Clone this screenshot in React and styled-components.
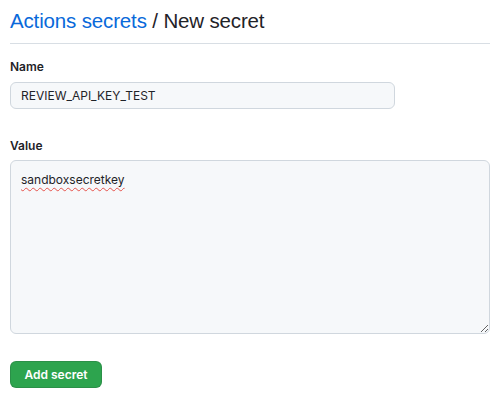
import React from 'react';
import styled, { createGlobalStyle } from 'styled-components';

const GlobalStyle = createGlobalStyle`
  body {
    margin: 0;
    background: #ffffff;
    font-family: Inter, "Noto Sans", "Liberation Sans", sans-serif;
    color: #1f2328;
  }
`;

const Page = styled.div`
  padding: 0 10px;
  width: 480px;
`;

const Header = styled.div`
  padding-top: 8px;
  padding-bottom: 9px;
  border-bottom: 1px solid #d8dee4;
  margin-bottom: 16px;
`;

const Title = styled.h1`
  margin: 0;
  font-family: "Liberation Sans", Arial, sans-serif;
  font-size: 20.5px;
  font-weight: 400;
  line-height: 26px;
  letter-spacing: -0.15px;
`;

const Crumb = styled.a`
  color: #0969da;
  text-decoration: none;
`;

const Field = styled.div`
  display: flex;
  flex-direction: column;
  gap: ${(props) => props.gap || 8}px;
  margin-bottom: ${(props) => props.spacing || 0}px;
`;

const Label = styled.label`
  font-size: 12px;
  font-weight: 600;
  line-height: 14px;
`;

const TextInput = styled.input`
  box-sizing: border-box;
  width: ${(props) => props.w || 385}px;
  height: 27px;
  padding: 0 10px;
  font-family: inherit;
  font-size: 12px;
  color: #1f2328;
  background: #f6f8fa;
  border: 1px solid #d0d7de;
  border-radius: 6px;
  outline: none;
`;

const TextArea = styled.textarea`
  box-sizing: border-box;
  width: 480px;
  height: 174px;
  padding: 10px 10px;
  font-family: inherit;
  font-size: 12px;
  line-height: 18px;
  color: #1f2328;
  background: #f6f8fa;
  border: 1px solid #d0d7de;
  border-radius: 6px;
  outline: none;
  resize: vertical;
  text-decoration-line: underline;
  text-decoration-style: wavy;
  text-decoration-color: #e5534b;
  text-decoration-thickness: 1px;
  text-underline-offset: 3px;
  display: block;
`;

const Button = styled.button`
  margin-top: 27px;
  width: 92px;
  height: 27px;
  padding: 0;
  font-family: inherit;
  font-size: 12px;
  font-weight: 600;
  color: #ffffff;
  background: ${(props) => props.color || '#2da44e'};
  border: 1px solid rgba(31, 35, 40, 0.15);
  border-radius: 6px;
  cursor: pointer;
`;

function App() {
  return (
    <>
      <GlobalStyle />
      <Page>
        <Header>
          <Title>
            <Crumb href="#">Actions secrets</Crumb> / New secret
          </Title>
        </Header>
        <Field spacing={30}>
          <Label htmlFor="secret-name">Name</Label>
          <TextInput id="secret-name" defaultValue="REVIEW_API_KEY_TEST" />
        </Field>
        <Field gap={7}>
          <Label htmlFor="secret-value">Value</Label>
          <TextArea id="secret-value" defaultValue="sandboxsecretkey" spellCheck={false} />
        </Field>
        <Button>Add secret</Button>
      </Page>
    </>
  );
}

export default App;
